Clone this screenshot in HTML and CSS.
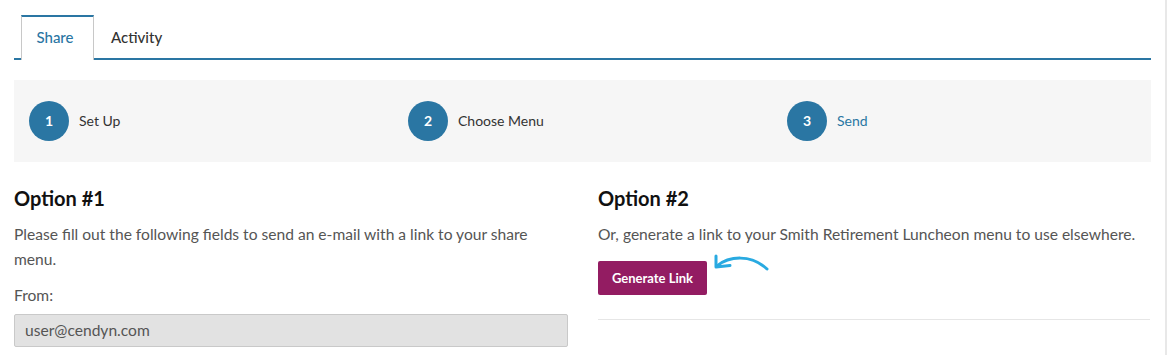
FILE: index.html
```html
<!DOCTYPE html>
<html>
<head>
<meta charset="utf-8">
<link rel="stylesheet" href="styles.css">
</head>
<body>
<div class="page">
  <div class="tabs">
    <div class="tab active">Share</div>
    <div class="tab">Activity</div>
  </div>
  <div class="steps">
    <div class="step"><span class="num">1</span><span class="label">Set Up</span></div>
    <div class="step"><span class="num">2</span><span class="label">Choose Menu</span></div>
    <div class="step"><span class="num">3</span><span class="label current">Send</span></div>
  </div>
  <div class="options">
    <div class="option">
      <h2>Option #1</h2>
      <p>Please fill out the following fields to send an e-mail with a link to your share menu.</p>
      <label class="field-label">From:</label>
      <div class="input">user@cendyn.com</div>
    </div>
    <div class="option">
      <h2>Option #2</h2>
      <p>Or, generate a link to your Smith Retirement Luncheon menu to use elsewhere.</p>
      <div class="btn-row">
        <button class="btn">Generate Link</button>
        <svg class="arrow" width="60" height="22" viewBox="0 0 60 22">
          <path d="M4 14 C 16 4, 38 2, 54 17" fill="none" stroke="#29aae1" stroke-width="3" stroke-linecap="round"/>
          <path d="M3 4 L3 15 L17 13.5" fill="none" stroke="#29aae1" stroke-width="3" stroke-linecap="round" stroke-linejoin="round"/>
        </svg>
      </div>
      <hr class="divider">
    </div>
  </div>
</div>
</body>
</html>
```
FILE: styles.css
```css
html, body {
  margin: 0;
  padding: 0;
  background: #fff;
}
body {
  font-family: Lato, "Open Sans", sans-serif;
  color: #333;
  width: 1167px;
  height: 355px;
  overflow: hidden;
  box-sizing: border-box;
  border-right: 2px solid #e8e8e8;
}
.page {
  padding: 15px 14px 0 14px;
  width: 1137px;
}
.tabs {
  display: flex;
  padding-left: 7px;
  border-bottom: 2px solid #2a76a3;
  height: 43px;
}
.tab {
  font-size: 15px;
  padding: 0 17px;
  line-height: 43px;
  color: #333;
  font-weight: 500;
}
.tab.active {
  color: #2a76a3;
  background: #fff;
  border-top: 2px solid #2a76a3;
  border-left: 1px solid #c8c8c8;
  border-right: 1px solid #c8c8c8;
  line-height: 41px;
  height: 43px;
  margin-bottom: -2px;
  padding: 0 18px 0 13px;
  width: 40px;
  text-align: center;
  box-sizing: content-box;
}
.tab:not(.active) { padding-left: 17px; line-height: 45px; }
.steps {
  margin-top: 20px;
  background: #f6f6f6;
  height: 82px;
  display: grid;
  grid-template-columns: 379px 379px 379px;
  align-items: center;
}
.step {
  display: flex;
  align-items: center;
  padding-left: 15px;
  margin-top: -1px;
}
.num {
  width: 40px;
  height: 40px;
  border-radius: 50%;
  background: #2a76a3;
  color: #fff;
  font-size: 14px;
  font-weight: 700;
  display: flex;
  align-items: center;
  justify-content: center;
}
.label {
  margin-left: 10px;
  font-size: 14px;
  color: #333;
}
.label.current { color: #2a76a3; }
.options {
  display: grid;
  grid-template-columns: 554px 553px;
  column-gap: 30px;
  margin-top: 23px;
}
h2 {
  margin: 0;
  font-size: 20px;
  font-weight: 700;
  color: #111;
  line-height: 26px;
}
p {
  margin: 11px 0 0 0;
  font-size: 15.6px;
  line-height: 25px;
  color: #555;
}
.field-label {
  display: block;
  margin-top: 12px;
  font-size: 15.6px;
  line-height: 22px;
  color: #555;
}
.input {
  margin-top: 8px;
  height: 33px;
  box-sizing: border-box;
  background: #e2e2e2;
  border: 1px solid #c9c9c9;
  border-radius: 2px;
  padding: 0 10px;
  font-size: 15.6px;
  line-height: 31px;
  color: #555;
}
.btn-row {
  display: flex;
  align-items: flex-start;
  margin-top: 14px;
}
.btn {
  background: #931c62;
  color: #fff;
  border: none;
  border-radius: 2px;
  font-family: Lato, "Open Sans", sans-serif;
  font-weight: 700;
  font-size: 13px;
  width: 109px;
  height: 34px;
  padding: 0;
}
.arrow {
  margin-left: 6px;
  margin-top: -9px;
}
.divider {
  border: none;
  border-top: 1px solid #e6e6e6;
  margin: 24px 0 0 0;
  width: 552px;
}
```
